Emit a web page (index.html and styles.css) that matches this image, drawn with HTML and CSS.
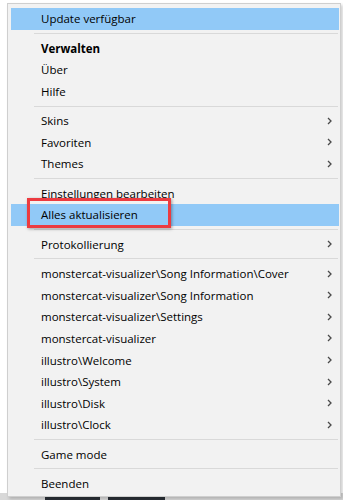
FILE: index.html
```html
<!DOCTYPE html>
<html lang="de">
<head>
<meta charset="utf-8">
<link rel="stylesheet" href="styles.css">
</head>
<body>
<div class="menu">
  <div class="item hl">Update verfügbar</div>
  <div class="sep"></div>
  <div class="item bold">Verwalten</div>
  <div class="item">Über</div>
  <div class="item">Hilfe</div>
  <div class="sep"></div>
  <div class="item sub">Skins<svg class="chev" viewBox="0 0 5 8"><polyline points="1,1 4,4 1,7"/></svg></div>
  <div class="item sub">Favoriten<svg class="chev" viewBox="0 0 5 8"><polyline points="1,1 4,4 1,7"/></svg></div>
  <div class="item sub">Themes<svg class="chev" viewBox="0 0 5 8"><polyline points="1,1 4,4 1,7"/></svg></div>
  <div class="sep"></div>
  <div class="item">Einstellungen bearbeiten</div>
  <div class="item hl marked">Alles aktualisieren<span class="redbox"></span></div>
  <div class="sep"></div>
  <div class="item sub">Protokollierung<svg class="chev" viewBox="0 0 5 8"><polyline points="1,1 4,4 1,7"/></svg></div>
  <div class="sep"></div>
  <div class="item sub">monstercat-visualizer\Song Information\Cover<svg class="chev" viewBox="0 0 5 8"><polyline points="1,1 4,4 1,7"/></svg></div>
  <div class="item sub">monstercat-visualizer\Song Information<svg class="chev" viewBox="0 0 5 8"><polyline points="1,1 4,4 1,7"/></svg></div>
  <div class="item sub">monstercat-visualizer\Settings<svg class="chev" viewBox="0 0 5 8"><polyline points="1,1 4,4 1,7"/></svg></div>
  <div class="item sub">monstercat-visualizer<svg class="chev" viewBox="0 0 5 8"><polyline points="1,1 4,4 1,7"/></svg></div>
  <div class="item sub">illustro\Welcome<svg class="chev" viewBox="0 0 5 8"><polyline points="1,1 4,4 1,7"/></svg></div>
  <div class="item sub">illustro\System<svg class="chev" viewBox="0 0 5 8"><polyline points="1,1 4,4 1,7"/></svg></div>
  <div class="item sub">illustro\Disk<svg class="chev" viewBox="0 0 5 8"><polyline points="1,1 4,4 1,7"/></svg></div>
  <div class="item sub">illustro\Clock<svg class="chev" viewBox="0 0 5 8"><polyline points="1,1 4,4 1,7"/></svg></div>
  <div class="sep"></div>
  <div class="item">Game mode</div>
  <div class="sep"></div>
  <div class="item">Beenden</div>
</div>
<div class="taskbar">
  <span class="tb-gray"></span>
  <span class="tb-dark a"></span>
  <span class="tb-dark b"></span>
</div>
</body>
</html>
```

FILE: styles.css
```css
html, body {
  margin: 0;
  padding: 0;
  background: #ffffff;
}
body {
  width: 343px;
  height: 500px;
  overflow: hidden;
  font-family: "Open Sans", "Noto Sans", "Liberation Sans", sans-serif;
  font-size: 11.5px;
  color: #000;
}
.menu {
  margin: 3px 0 0 7px;
  width: 334px;
  box-sizing: border-box;
  background: #f2f2f2;
  border: 1px solid #cfcfcf;
  padding: 4px 1px 2px 3px;
  box-shadow: 2px 2px 3px rgba(0,0,0,0.18);
  position: relative;
  z-index: 1;
}
.item {
  height: 21.6px;
  display: flex;
  align-items: center;
  padding: 0 7px 0 30px;
  white-space: nowrap;
  position: relative;
}
.item.bold { font-weight: 700; }
.item.hl { background: #91c9f7; }
.item.sub { justify-content: space-between; }
.chev {
  width: 5px;
  height: 8px;
  fill: none;
  stroke: #4a4a4a;
  stroke-width: 1.3;
}
.sep {
  height: 1px;
  margin: 3.4px 1px 3.4px 23px;
  background: #d9d9d9;
}
.redbox {
  position: absolute;
  left: 16px;
  top: -6.5px;
  width: 144px;
  height: 30px;
  box-sizing: border-box;
  border: 3px solid #ec3b40;
  box-shadow: 1px 1px 3px rgba(0,0,0,0.35);
}
.taskbar {
  display: flex;
  height: 8px;
  background: #d8d8d8;
  margin-top: -4px;
}
.tb-gray { width: 45px; }
.tb-dark { background: #2a2f36; }
.tb-dark.a { width: 55px; }
.tb-dark.b { width: 57px; margin-left: 8px; }
```
